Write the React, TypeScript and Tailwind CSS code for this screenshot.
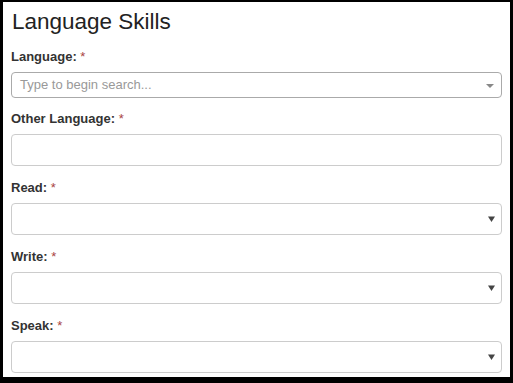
import React from "react";

const Label = ({ text, className = "" }: { text: string; className?: string }) => (
  <div className={`h-[18px] leading-[18px] text-[13px] font-bold text-[#333] ${className}`}>
    {text} <span className="font-normal text-[#a94442]">*</span>
  </div>
);

const Caret = () => (
  <svg width="7" height="6" viewBox="0 0 7 6" className="absolute right-[6px] top-1/2 -translate-y-1/2">
    <polygon points="0,0.5 7,0.5 3.5,6" fill="#444" />
  </svg>
);

const SelectBox = ({ className = "" }: { className?: string }) => (
  <div className={`relative h-[32px] rounded-[4px] border border-[#ccc] bg-white ${className}`}>
    <Caret />
  </div>
);

export default function App() {
  return (
    <div className="h-[383px] w-[513px] overflow-hidden border-t-2 border-l-[3px] border-r-[3px] border-b-[6px] border-black bg-white px-2 font-['Liberation_Sans',Arial,sans-serif]">
      <h1 className="mt-[8px] h-[24px] pl-[1px] text-[22.5px] leading-[24px] font-normal text-[#222]">
        Language Skills
      </h1>
      <Label text="Language:" className="mt-[14px]" />
      <div className="relative mt-[6px] flex h-[26px] items-center rounded-[4px] border border-[#aaa] bg-white pl-[8px]">
        <span className="text-[13px] text-[#999]">Type to begin search...</span>
        <svg width="8" height="4" viewBox="0 0 8 4" className="absolute right-[7px] top-[11px]">
          <polygon points="0,0 8,0 4,4" fill="#888" />
        </svg>
      </div>
      <Label text="Other Language:" className="mt-[12px]" />
      <div className="mt-[6px] h-[32px] rounded-[4px] border border-[#ccc] bg-white" />
      <Label text="Read:" className="mt-[13px]" />
      <SelectBox className="mt-[6px]" />
      <Label text="Write:" className="mt-[13px]" />
      <SelectBox className="mt-[6px]" />
      <Label text="Speak:" className="mt-[13px]" />
      <SelectBox className="mt-[6px]" />
    </div>
  );
}
